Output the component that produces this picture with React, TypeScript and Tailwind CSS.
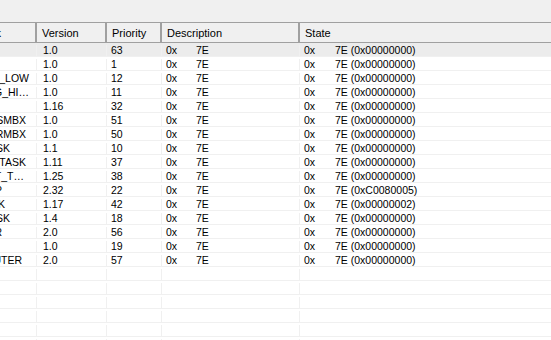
import type { FC } from 'react';

interface TaskRow {
    name: string;
    nameEnd: number; // right padding of the clipped name cell
    version: string;
    priority: string;
    state: string;
}

const ROWS: TaskRow[] = [
    { name: '', nameEnd: 0, version: '1.0', priority: '63', state: '0x00000000' },
    { name: '', nameEnd: 0, version: '1.0', priority: '1', state: '0x00000000' },
    { name: 'NG_LOW', nameEnd: 7, version: '1.0', priority: '12', state: '0x00000000' },
    { name: 'NG_HI…', nameEnd: 7, version: '1.0', priority: '11', state: '0x00000000' },
    { name: '', nameEnd: 0, version: '1.16', priority: '32', state: '0x00000000' },
    { name: 'K_SMBX', nameEnd: 10, version: '1.0', priority: '51', state: '0x00000000' },
    { name: 'K_RMBX', nameEnd: 10, version: '1.0', priority: '50', state: '0x00000000' },
    { name: 'ASK', nameEnd: 26, version: '1.1', priority: '10', state: '0x00000000' },
    { name: 'G_TASK', nameEnd: 10, version: '1.11', priority: '37', state: '0x00000000' },
    { name: 'ST_T…', nameEnd: 12, version: '1.25', priority: '38', state: '0x00000000' },
    { name: 'P', nameEnd: 34, version: '2.32', priority: '22', state: '0xC0080005' },
    { name: 'SK', nameEnd: 31, version: '1.17', priority: '42', state: '0x00000002' },
    { name: 'ASK', nameEnd: 26, version: '1.4', priority: '18', state: '0x00000000' },
    { name: 'ER', nameEnd: 34, version: '2.0', priority: '56', state: '0x00000000' },
    { name: '', nameEnd: 0, version: '1.0', priority: '19', state: '0x00000000' },
    { name: 'OMPUTER', nameEnd: 14, version: '2.0', priority: '57', state: '0x00000000' },
];

const EMPTY_ROWS = 6;

const HeaderCell: FC<{ label: string; className: string; clip?: boolean }> = ({ label, className, clip }) => (
    <div
        className={`${className} h-full flex items-center pt-[1px] overflow-hidden whitespace-nowrap border-r-2 border-r-[#a0a0a0] ${
            clip ? 'justify-end pr-[34px]' : 'pl-[5px]'
        }`}
    >
        {label}
    </div>
);

const DataRow: FC<{ row?: TaskRow; selected?: boolean }> = ({ row, selected }) => (
    <div className={`flex h-[14px] pt-[2px] border-b border-[#f0f0f0] ${selected ? 'bg-[#ececec]' : 'bg-white'}`}>
        <div className="w-[37px] shrink-0 flex justify-end items-center overflow-hidden whitespace-nowrap border-r border-[#f0f0f0]">
            {row?.name && <span style={{ paddingRight: row.nameEnd }}>{row.name}</span>}
        </div>
        <div className="w-[70px] shrink-0 pl-[6px] flex items-center border-r border-[#f0f0f0]">{row?.version}</div>
        <div className="w-[55px] shrink-0 pl-[4px] flex items-center border-r border-[#f0f0f0]">{row?.priority}</div>
        <div className="w-[138px] shrink-0 pl-[4px] flex items-center border-r border-[#f0f0f0] whitespace-nowrap">
            {row && (
                <>
                    <span className="w-[30px] shrink-0">0x</span>
                    <span>7E</span>
                </>
            )}
        </div>
        <div className="flex-1 pl-[4px] flex items-center whitespace-nowrap">
            {row && (
                <>
                    <span className="w-[31px] shrink-0">0x</span>
                    <span>7E ({row.state})</span>
                </>
            )}
        </div>
    </div>
);

export default function App() {
    return (
        <div
            className="w-[551px] h-[340px] overflow-hidden bg-white text-black text-[10.5px] leading-none"
            style={{ fontFamily: '"Liberation Sans", Arial, sans-serif' }}
        >
            {/* toolbar strip above the list */}
            <div className="h-[22px] bg-[#f0f0f0]" />

            {/* column header */}
            <div className="flex h-[21px] bg-[#f0f0f0] border-t border-b border-[#a0a0a0] text-[11px]">
                <HeaderCell label="sk" className="w-[37px] shrink-0" clip />
                <HeaderCell label="Version" className="w-[70px] shrink-0" />
                <HeaderCell label="Priority" className="w-[55px] shrink-0" />
                <HeaderCell label="Description" className="w-[138px] shrink-0" />
                <div className="flex-1 h-full flex items-center pt-[1px] pl-[5px]">State</div>
            </div>

            {/* rows */}
            {ROWS.map((row, i) => (
                <DataRow key={i} row={row} selected={i === 0} />
            ))}
            {Array.from({ length: EMPTY_ROWS }).map((_, i) => (
                <DataRow key={`e${i}`} />
            ))}
        </div>
    );
}
